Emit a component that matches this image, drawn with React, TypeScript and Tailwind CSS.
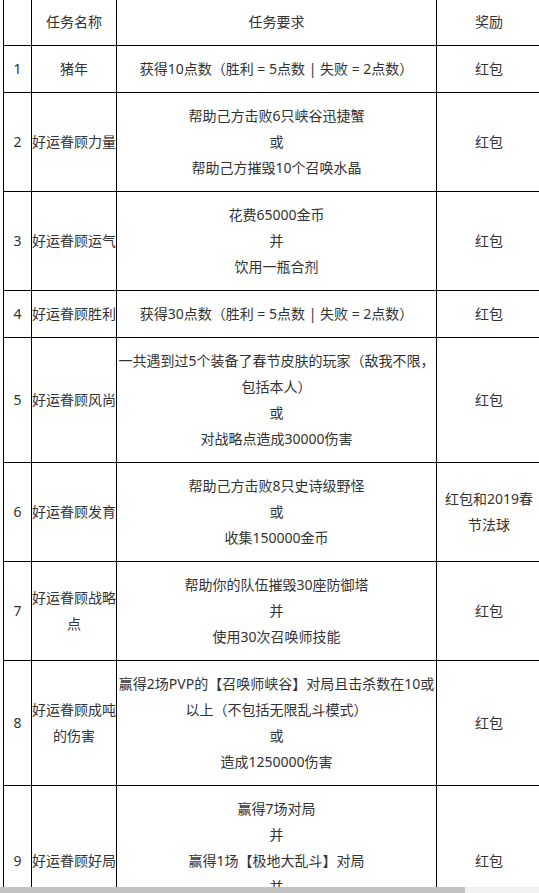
type Row = {
  no: string;
  name: string[];
  req: string[];
  reward: string[];
};

const rows: Row[] = [
  { no: "1", name: ["猪年"], req: ["获得10点数（胜利 = 5点数 | 失败 = 2点数）"], reward: ["红包"] },
  {
    no: "2",
    name: ["好运眷顾力量"],
    req: ["帮助己方击败6只峡谷迅捷蟹", "或", "帮助己方摧毁10个召唤水晶"],
    reward: ["红包"],
  },
  {
    no: "3",
    name: ["好运眷顾运气"],
    req: ["花费65000金币", "并", "饮用一瓶合剂"],
    reward: ["红包"],
  },
  { no: "4", name: ["好运眷顾胜利"], req: ["获得30点数（胜利 = 5点数 | 失败 = 2点数）"], reward: ["红包"] },
  {
    no: "5",
    name: ["好运眷顾风尚"],
    req: ["一共遇到过5个装备了春节皮肤的玩家（敌我不限，", "包括本人）", "或", "对战略点造成30000伤害"],
    reward: ["红包"],
  },
  {
    no: "6",
    name: ["好运眷顾发育"],
    req: ["帮助己方击败8只史诗级野怪", "或", "收集150000金币"],
    reward: ["红包和2019春", "节法球"],
  },
  {
    no: "7",
    name: ["好运眷顾战略", "点"],
    req: ["帮助你的队伍摧毁30座防御塔", "并", "使用30次召唤师技能"],
    reward: ["红包"],
  },
  {
    no: "8",
    name: ["好运眷顾成吨", "的伤害"],
    req: ["赢得2场PVP的【召唤师峡谷】对局且击杀数在10或", "以上（不包括无限乱斗模式）", "或", "造成1250000伤害"],
    reward: ["红包"],
  },
  {
    no: "9",
    name: ["好运眷顾好局"],
    req: ["赢得7场对局", "并", "赢得1场【极地大乱斗】对局", "并", "获得20次助攻"],
    reward: ["红包"],
  },
];

function Lines({ lines }: { lines: string[] }) {
  return (
    <>
      {lines.map((l, i) => (
        <div key={i} className="whitespace-nowrap">
          {l}
        </div>
      ))}
    </>
  );
}

const cell = "border border-black py-2.5 px-0 text-center align-middle";

export default function App() {
  return (
    <div className="h-[893px] flex flex-col bg-white">
      <div className="h-[887px] overflow-hidden">
        <div className="w-[625px] pl-[3px] -mt-[2px]">
          <table className="table-fixed border-collapse w-[538px] text-[14px] leading-[26px] text-[#333] font-['Noto_Sans','Noto_Sans_CJK_SC',sans-serif]">
            <colgroup>
              <col className="w-[28px]" />
              <col className="w-[85px]" />
              <col className="w-[320px]" />
              <col className="w-[105px]" />
            </colgroup>
            <thead>
              <tr>
                <th className={`${cell} font-normal`}></th>
                <th className={`${cell} font-normal`}>任务名称</th>
                <th className={`${cell} font-normal`}>任务要求</th>
                <th className={`${cell} font-normal`}>奖励</th>
              </tr>
            </thead>
            <tbody>
              {rows.map((r) => (
                <tr key={r.no}>
                  <td className={cell}>{r.no}</td>
                  <td className={cell}>
                    <Lines lines={r.name} />
                  </td>
                  <td className={cell}>
                    <Lines lines={r.req} />
                  </td>
                  <td className={cell}>
                    <Lines lines={r.reward} />
                  </td>
                </tr>
              ))}
            </tbody>
          </table>
        </div>
      </div>
      {/* horizontal scrollbar */}
      <div className="h-[6px] bg-[#f1f1f1]">
        <div className="h-full w-[465px] bg-[#c1c1c1]" />
      </div>
    </div>
  );
}
